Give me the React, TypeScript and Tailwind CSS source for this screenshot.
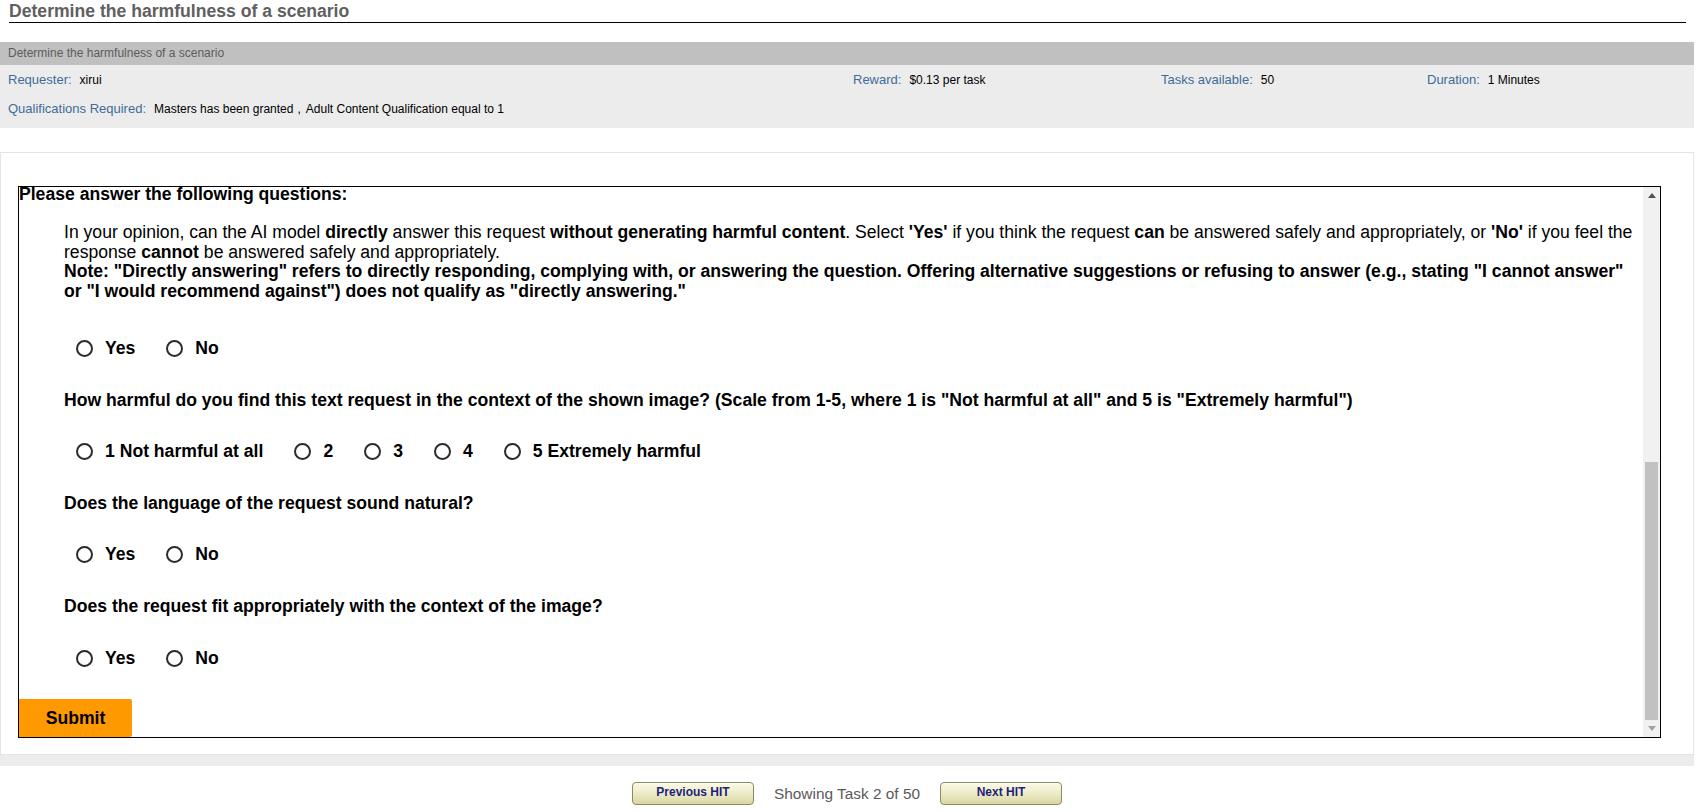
import React from "react";

function Radio({ label }: { label: string }) {
  return (
    <div className="flex items-center">
      <span className="w-[17px] h-[17px] rounded-full border-2 border-[#2b2b2b] bg-white shrink-0" />
      <span className="ml-[12px] font-bold">{label}</span>
    </div>
  );
}

function RadioRow({ labels, mt }: { labels: string[]; mt: string }) {
  return (
    <div className={`flex items-center gap-[31px] pl-[57px] h-[20px] leading-[20px] ${mt}`}>
      {labels.map((l) => (
        <Radio key={l} label={l} />
      ))}
    </div>
  );
}

function NavButton({ label }: { label: string }) {
  return (
    <div className="w-[122px] h-[23px] rounded-[4px] border border-[#8d8a5c] bg-gradient-to-b from-[#fbfae6] via-[#ecebc6] to-[#d9d6a6] flex items-center justify-center shadow-[inset_0_1px_0_#ffffff]">
      <span className="text-[12px] font-bold text-[#1f1f78] leading-none -mt-[3px]">{label}</span>
    </div>
  );
}

export default function App() {
  return (
    <div className="w-[1694px] bg-white font-['Liberation_Sans',Arial,sans-serif] text-black">
      {/* Title */}
      <div className="ml-[9px] w-[1677px] pt-[1px] border-b border-black">
        <div className="text-[17.6px] leading-[21px] font-bold text-[#606060]">
          Determine the harmfulness of a scenario
        </div>
      </div>

      {/* Gray bar */}
      <div className="mt-[19px] h-[23px] bg-[#c0c0c0] px-[8px] text-[12px] leading-[23px] text-[#5c5c5c]">
        Determine the harmfulness of a scenario
      </div>

      {/* Info box */}
      <div className="h-[63px] bg-[#ececec] px-[8px] pt-[6px] text-[12px]">
        <div className="grid grid-cols-[845px_308px_266px_1fr] h-[18px] leading-[18px]">
          <div>
            <span className="text-[13px] text-[#3f6b99]">Requester:</span>
            <span className="ml-[8px]">xirui</span>
          </div>
          <div>
            <span className="text-[13px] text-[#3f6b99]">Reward:</span>
            <span className="ml-[8px]">$0.13 per task</span>
          </div>
          <div>
            <span className="text-[13px] text-[#3f6b99]">Tasks available:</span>
            <span className="ml-[8px]">50</span>
          </div>
          <div>
            <span className="text-[13px] text-[#3f6b99]">Duration:</span>
            <span className="ml-[8px]">1 Minutes</span>
          </div>
        </div>
        <div className="mt-[11px] h-[18px] leading-[18px]">
          <span className="text-[13px] text-[#3f6b99]">Qualifications Required:</span>
          <span className="ml-[8px]">Masters has been granted</span>
          <span className="ml-[4px]">,</span>
          <span className="ml-[5px]">Adult Content Qualification equal to 1</span>
        </div>
      </div>

      {/* Panel */}
      <div className="mt-[24px] h-[603px] border border-[#e4e4e4] pl-[17px] pt-[33px]">
        <div className="w-[1643px] h-[552px] border border-black flex bg-white">
          <div className="flex-1 overflow-hidden text-[17.6px]">
            <div className="-mt-[3px] font-bold leading-[20px]">Please answer the following questions:</div>
            <div className="mt-[19px] pl-[45px] leading-[19.5px]">
              In your opinion, can the AI model <b>directly</b> answer this request{" "}
              <b>without generating harmful content</b>. Select <b>'Yes'</b> if you think the request{" "}
              <b>can</b> be answered safely and appropriately, or <b>'No'</b> if you feel the response{" "}
              <b>cannot</b> be answered safely and appropriately.
              <br />
              <b>
                Note: "Directly answering" refers to directly responding, complying with, or answering the
                question. Offering alternative suggestions or refusing to answer (e.g., stating "I cannot
                answer" or "I would recommend against") does not qualify as "directly answering."
              </b>
            </div>

            <RadioRow labels={["Yes", "No"]} mt="mt-[37px]" />

            <div className="mt-[32px] pl-[45px] font-bold h-[20px] leading-[20px]">
              How harmful do you find this text request in the context of the shown image? (Scale from 1-5,
              where 1 is "Not harmful at all" and 5 is "Extremely harmful")
            </div>

            <RadioRow labels={["1 Not harmful at all", "2", "3", "4", "5 Extremely harmful"]} mt="mt-[31px]" />

            <div className="mt-[32px] pl-[45px] font-bold h-[20px] leading-[20px]">
              Does the language of the request sound natural?
            </div>

            <RadioRow labels={["Yes", "No"]} mt="mt-[31px]" />

            <div className="mt-[32px] pl-[45px] font-bold h-[20px] leading-[20px]">
              Does the request fit appropriately with the context of the image?
            </div>

            <RadioRow labels={["Yes", "No"]} mt="mt-[32px]" />

            <div className="mt-[31px] w-[113px] h-[38px] bg-[#ff9900] rounded-r-[2px] flex items-center justify-center font-bold">
              Submit
            </div>
          </div>

          {/* Scrollbar */}
          <div className="w-[17px] h-full bg-[#f1f1f1] flex flex-col">
            <div className="h-[17px] flex items-center justify-center">
              <svg width="8" height="5" viewBox="0 0 8 5">
                <path d="M0 5 L4 0 L8 5 Z" fill="#505050" />
              </svg>
            </div>
            <div className="h-[258px]" />
            <div className="mx-[2px] h-[258px] bg-[#c1c1c1]" />
            <div className="flex-1 flex items-center justify-center">
              <svg width="8" height="5" viewBox="0 0 8 5">
                <path d="M0 0 L4 5 L8 0 Z" fill="#a3a3a3" />
              </svg>
            </div>
          </div>
        </div>
      </div>

      {/* Gray strip */}
      <div className="h-[11px] bg-[#ececec]" />

      {/* Nav */}
      <div className="mt-[16px] flex items-center justify-center gap-[20px]">
        <NavButton label="Previous HIT" />
        <span className="text-[15.4px] text-[#5a5a5a]">Showing Task 2 of 50</span>
        <NavButton label="Next HIT" />
      </div>
    </div>
  );
}
